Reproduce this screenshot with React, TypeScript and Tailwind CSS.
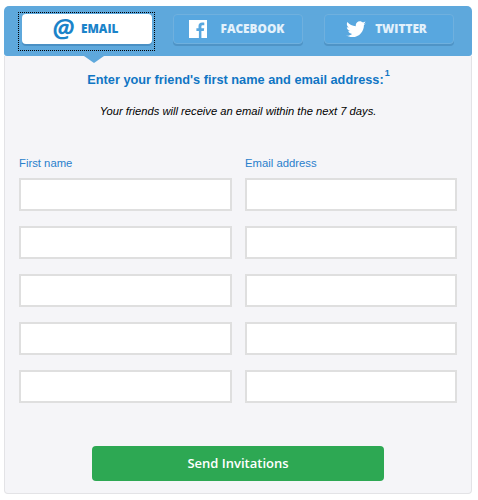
import React from "react";

function FbIcon() {
  return (
    <svg width="18" height="18" viewBox="0 0 18 18" className="shrink-0">
      <path fill="#fff" d="M0 0h18v18h-5.6v-7h2.4l.4-2.8h-2.8V6.5c0-.8.3-1.3 1.4-1.3h1.500V2.700c-.3 0-1.200-.1-2.200-.1-2.200 0-3.600 1.300-3.600 3.700v1.900H7.400V11h2.500v7H0z" />
    </svg>
  );
}

function TwIcon() {
  return (
    <svg width="20" height="17" viewBox="0 0 24 20" className="shrink-0">
      <path fill="#fff" d="M24 2.400c-.9.4-1.800.7-2.800.8 1-.6 1.800-1.600 2.200-2.700-1 .6-2 1-3.100 1.200C19.300.7 18 0 16.600 0c-2.700 0-4.900 2.200-4.900 4.900 0 .4 0 .8.1 1.100C7.700 5.800 4.100 3.900 1.700.9c-.4.7-.7 1.600-.7 2.500 0 1.700.9 3.200 2.200 4.100-.8 0-1.600-.2-2.200-.6v.1c0 2.400 1.700 4.400 3.900 4.800-.4.1-.8.2-1.300.2-.3 0-.6 0-.9-.1.6 2 2.400 3.400 4.600 3.400-1.700 1.300-3.800 2.100-6.100 2.100-.4 0-.8 0-1.200-.1C2.200 18.300 4.800 19.100 7.500 19.100c9.100 0 14-7.500 14-14v-.6c1-.7 1.800-1.600 2.500-2.100z" />
    </svg>
  );
}

function Tab({ icon, label, active, extra }: { icon: React.ReactNode; label: string; active?: boolean; extra: string }) {
  return (
    <div
      className={
        (active
          ? "w-[130px] h-[30px] rounded-[4px] bg-white shadow-[0_2px_0_#4a90c4] flex items-center justify-center "
          : "w-[130px] h-[30px] rounded-[4px] bg-[#58a7df] border border-[#6fb0de] shadow-[0_2px_0_#4f94c6] flex items-center justify-center ") + extra
      }
    >
      {icon}
      <span
        className={
          "font-['Open_Sans',sans-serif] font-extrabold text-[11.8px] leading-none " +
          (active ? "text-[#1b83c9]" : "text-[#e3f1fb]")
        }
      >
        {label}
      </span>
    </div>
  );
}

function Field() {
  return <div className="h-[33px] bg-white border-2 border-[#dfdfdf]" />;
}

export default function App() {
  const rows = [0, 1, 2, 3, 4];
  return (
    <div className="w-[478px] h-[500px] bg-white pt-[6px] px-[4px] font-['Liberation_Sans',Arial,sans-serif]">
      <div className="w-[468px] h-[50px] bg-[#5ea8dc] rounded-t-[5px] rounded-b-[3px] pt-[8px] pl-[18px] flex gap-[21px] relative z-10">
        <div className="relative">
          <Tab
            active
            extra="gap-[7px] pr-[3px]"
            label="EMAIL"
            icon={
              <span className="font-['Open_Sans',sans-serif] font-bold italic text-[25px] leading-none text-[#1b83c9] -mt-[4px]">
                @
              </span>
            }
          />
          <div className="absolute -left-[4px] -top-[2px] w-[137px] h-[39px] border border-dotted border-black" />
        </div>
        <Tab extra="gap-[14px] pr-[3px]" label="FACEBOOK" icon={<FbIcon />} />
        <Tab extra="gap-[9px] pr-[5px]" label="TWITTER" icon={<TwIcon />} />
        <div className="absolute left-[80px] top-[50px] w-0 h-0 border-l-[10px] border-r-[10px] border-t-[7px] border-l-transparent border-r-transparent border-t-[#5ea8dc]" />
      </div>
      <div className="w-[468px] h-[438px] bg-[#f5f5f8] border border-[#e3e3e6] border-t-0 rounded-b-[4px] pt-[15px] px-[14px]">
        <div className="text-center text-[12.75px] font-bold leading-[18px] text-[#1075c4] h-[18px] pr-[5px]">
          <span className="relative">
            Enter your friend's first name and email address:
            <span className="absolute left-full -top-[6px] ml-[1px] text-[9px] leading-[14px]">1</span>
          </span>
        </div>
        <div className="mt-[13px] text-center text-[11.2px] italic leading-[18px] text-black">
          Your friends will receive an email within the next 7 days.
        </div>
        <div className="mt-[36px] grid grid-cols-[213px_212px] gap-x-[13px] gap-y-[15px]">
          <div className="text-[11.3px] leading-[14px] text-[#2a80cc] -mb-[7px]">First name</div>
          <div className="text-[11.3px] leading-[14px] text-[#2a80cc] -mb-[7px]">Email address</div>
          {rows.map((r) => (
            <React.Fragment key={r}>
              <Field />
              <Field />
            </React.Fragment>
          ))}
        </div>
        <button className="mt-[43px] ml-[73px] block w-[292px] h-[35px] rounded-[4px] bg-[#2da853] text-white font-['Open_Sans',sans-serif] font-semibold text-[13px] leading-none">
          Send Invitations
        </button>
      </div>
    </div>
  );
}
